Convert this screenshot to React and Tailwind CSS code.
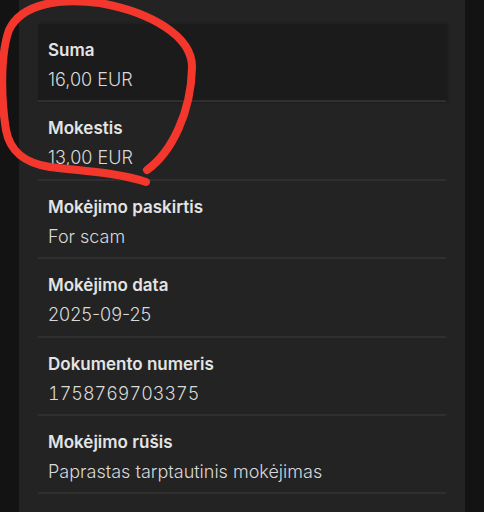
const rows = [
  { label: 'Suma', value: '16,00 EUR', active: true },
  { label: 'Mokestis', value: '13,00 EUR' },
  { label: 'Mokėjimo paskirtis', value: 'For scam' },
  { label: 'Mokėjimo data', value: '2025-09-25' },
  { label: 'Dokumento numeris', value: '1758769703375', mono: true },
  { label: 'Mokėjimo rūšis', value: 'Paprastas tarptautinis mokėjimas' },
];

function DetailRow({ label, value, active, mono }) {
  return (
    <div
      className={`h-[78.4px] border-b-2 border-[#2f2f2f] px-[10px] pt-[12px] ${
        active ? 'bg-[#1b1b1b] shadow-[2px_0_3px_rgba(0,0,0,0.25)]' : ''
      }`}
    >
      <div className="text-[17px] leading-[28px] font-semibold text-[#e4e4e4]">{label}</div>
      <div className={`mt-[2px] text-[18px] leading-[28px] font-light text-[#d9d9d9] ${mono ? 'tabular-nums' : ''}`}>
        {value}
      </div>
    </div>
  );
}

export default function App() {
  return (
    <div
      className="relative h-[512px] w-[484px] overflow-hidden bg-[#131313] px-[19px]"
      style={{ fontFamily: 'Inter, "Noto Sans", sans-serif' }}
    >
      <div className="h-full bg-[#232323] px-[19px] pt-[24px]">
        {rows.map((r) => (
          <DetailRow key={r.label} {...r} />
        ))}
      </div>

      {/* red marker scribble drawn over the first two rows */}
      <svg className="pointer-events-none absolute left-0 top-0" width="200" height="195" viewBox="0 0 200 195">
        <path
          d="M147 170 C172 152 191 112 192 68 C193 36 150 12 100 3 C60 -2 22 3 9 30 C0 55 1 100 6 130 C10 152 25 163 50 167 C80 171 115 172 146 182"
          fill="none"
          stroke="#f3372d"
          strokeWidth="8"
          strokeLinecap="round"
          strokeLinejoin="round"
        />
      </svg>
    </div>
  );
}
